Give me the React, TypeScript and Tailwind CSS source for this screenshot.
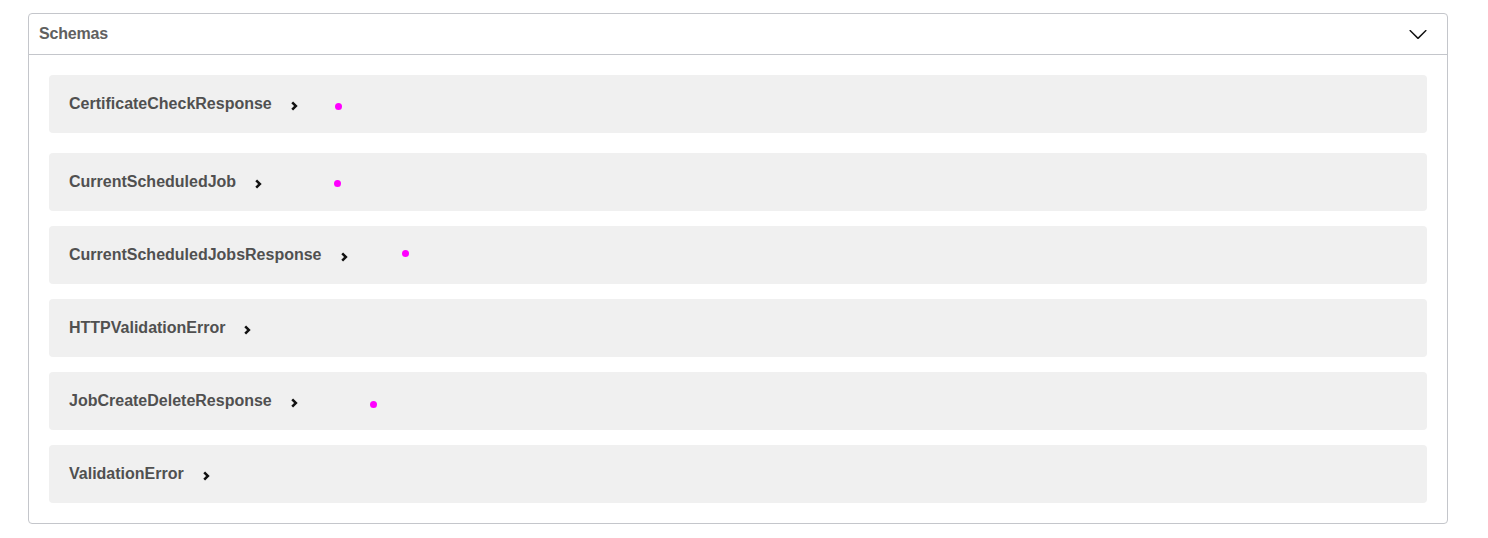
import React from "react";

const schemas = [
  "CertificateCheckResponse",
  "CurrentScheduledJob",
  "CurrentScheduledJobsResponse",
  "HTTPValidationError",
  "JobCreateDeleteResponse",
  "ValidationError",
];

const dots = [
  { x: 338, y: 106 },
  { x: 337.5, y: 183 },
  { x: 405.5, y: 253 },
  { x: 373.5, y: 404 },
];

function Chevron() {
  return (
    <svg width="7" height="10" viewBox="0 0 7 10" className="ml-[19px] mt-[3px] shrink-0">
      <polyline points="1.2,1.3 4.9,5 1.2,8.7" fill="none" stroke="#111" strokeWidth="2.5" strokeLinecap="butt" strokeLinejoin="miter" />
    </svg>
  );
}

export default function App() {
  return (
    <div className="relative bg-white w-[1488px] h-[538px] pt-[13px] pl-[28px]" style={{ fontFamily: '"Liberation Sans", Arial, sans-serif' }}>
      <section className="w-[1420px] border border-[#c4c6cb] rounded-[4px]">
        <div className="h-[41px] flex items-center justify-between border-b border-[#c4c6cb] pl-[10px] pr-[19px]">
          <h4 className="text-[16px] font-bold text-[#606060] tracking-[-0.2px]">Schemas</h4>
          <svg width="20" height="20" viewBox="0 0 20 20" className="mt-[-1px]">
            <path
              d="M17.418 6.109c.272-.268.709-.268.979 0s.271.701 0 .969l-7.908 7.83c-.27.268-.707.268-.979 0l-7.908-7.83c-.27-.268-.27-.701 0-.969.271-.268.709-.268.979 0L10 13.25l7.418-7.141z"
              fill="#111"
            />
          </svg>
        </div>
        <div className="px-5 pt-5 pb-5 flex flex-col">
          {schemas.map((s, i) => (
            <div
              key={s}
              className={`h-[58px] bg-[#f0f0f0] rounded-[4px] flex items-center pl-5 ${i === 0 ? "mb-5" : i === schemas.length - 1 ? "" : "mb-[15px]"}`}
            >
              <span className="text-[16px] font-bold text-[#505050]">{s}</span>
              <Chevron />
            </div>
          ))}
        </div>
      </section>
      {dots.map((d, i) => (
        <div
          key={i}
          className="absolute w-[7px] h-[7px] rounded-full bg-[#ff00ff]"
          style={{ left: d.x - 3.5, top: d.y - 3.5 }}
        />
      ))}
    </div>
  );
}
